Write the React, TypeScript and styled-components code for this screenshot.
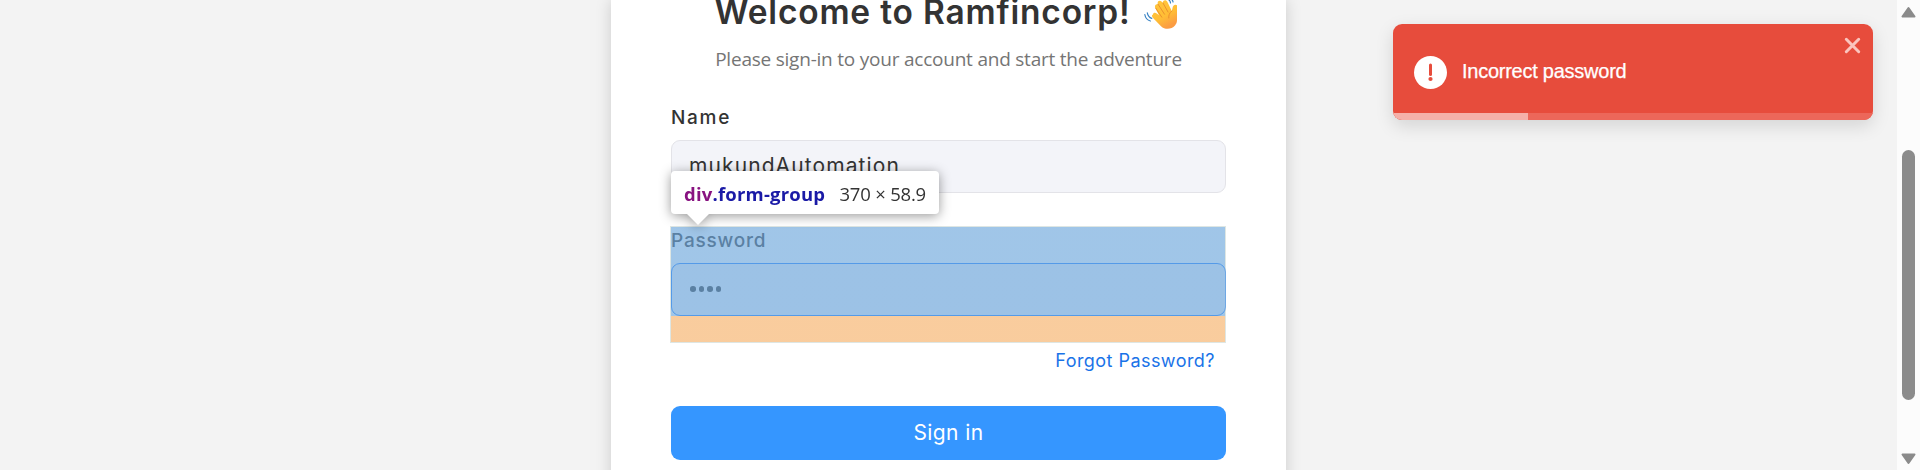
import React from 'react';
import styled, { createGlobalStyle } from 'styled-components';

const Global = createGlobalStyle`
  * { box-sizing: border-box; }
  body { margin: 0; background: #f3f3f3; overflow: hidden; font-family: Inter, "Liberation Sans", sans-serif; }
`;

const Screen = styled.div`
  display: flex;
  height: 470px;
  overflow: hidden;
  position: relative;
`;

const Main = styled.main`
  width: 1897px;
  display: flex;
  justify-content: center;
  background: #f3f3f3;
`;

const Card = styled.section`
  width: 675px;
  height: 500px;
  padding: 0 60px;
  background: #fff;
  box-shadow: 0 0 15px rgba(0, 0, 0, 0.16);
`;

const Title = styled.h1`
  display: flex;
  justify-content: center;
  margin: 0;
  height: 25px;
  padding-right: 6px;
  font-size: 33.5px;
  line-height: 25px;
  font-weight: 600;
  letter-spacing: 0.8px;
  white-space: nowrap;
  color: #333;
`;

const Wave = styled.svg`
  flex: none;
  width: 33px;
  height: 30px;
  margin-left: 13px;
`;

const Subtitle = styled.p`
  margin: 20px 0 31px;
  height: 28px;
  line-height: 28px;
  text-align: center;
  white-space: nowrap;
  font-family: "Open Sans", "Noto Sans", sans-serif;
  font-size: 19px;
  letter-spacing: -0.22px;
  color: #757575;
`;

const FormGroup = styled.div<{ $gap: number }>`
  position: relative;
  height: 89px;
  margin-bottom: ${(p) => p.$gap}px;
`;

const Label = styled.label<{ $spacing: number }>`
  display: block;
  height: 27px;
  margin-bottom: 9px;
  font-size: 19px;
  line-height: 27px;
  font-weight: 500;
  letter-spacing: ${(p) => p.$spacing}px;
  color: #333;
`;

const Field = styled.div<{ $focused?: boolean }>`
  display: flex;
  align-items: center;
  height: 53px;
  padding: 0 17px 2px 17px;
  border: 1px solid ${(p) => (p.$focused ? '#2080ff' : '#e3e3e8')};
  border-radius: 9px;
  background: #f3f4f9;
  font-size: 21px;
  letter-spacing: 1.1px;
  color: #333;
`;

const Dots = styled.div`
  display: flex;
  gap: 3px;
  padding: 1px 0 0 1px;
`;

const Dot = styled.i`
  width: 5.6px;
  height: 5.6px;
  border-radius: 50%;
  background: #333;
`;

const Highlight = styled.div`
  position: absolute;
  inset: -1px 0 -27px -1px;
  border: 1px solid rgba(190, 205, 200, 0.5);
  background: linear-gradient(rgba(111, 168, 220, 0.66) 89px, rgba(246, 178, 107, 0.66) 89px);
  background-clip: padding-box;
`;

const Tooltip = styled.div`
  position: absolute;
  top: -56px;
  left: 0;
  display: flex;
  align-items: center;
  width: 268px;
  height: 43px;
  padding: 1px 13px 0;
  border-radius: 4px;
  background: #fff;
  filter: drop-shadow(0 2px 6px rgba(0, 0, 0, 0.4));
  font-family: "Open Sans", "Noto Sans", sans-serif;
  font-size: 18.5px;
  white-space: nowrap;
  color: #333;
  &::after {
    content: '';
    position: absolute;
    left: 15px;
    top: 42px;
    border: 12px solid transparent;
    border-top-color: #fff;
    border-bottom: 0;
  }
`;

const Selector = styled.span`
  font-weight: 700;
  color: #1a1aa6;
  letter-spacing: 0.2px;
`;
const Tag = styled.span`
  color: #881280;
`;
const Size = styled.span`
  margin-left: auto;
  letter-spacing: -0.2px;
`;

const Forgot = styled.a`
  display: block;
  height: 24px;
  margin-bottom: 33px;
  padding-right: 11px;
  text-align: right;
  font-size: 18px;
  line-height: 24px;
  letter-spacing: 0.45px;
  color: #1a73e8;
`;

const Submit = styled.button`
  display: block;
  width: 100%;
  height: 54px;
  padding: 0 0 1px;
  border: 0;
  border-radius: 9px;
  background: #3596ff;
  color: #fff;
  font-family: inherit;
  font-size: 21px;
  letter-spacing: 0.4px;
`;

const Toast = styled.aside`
  position: absolute;
  top: 24px;
  left: 1393px;
  display: flex;
  align-items: center;
  width: 480px;
  height: 96px;
  padding: 0 12px 0 21px;
  border-radius: 9px;
  overflow: hidden;
  background: #e74c3c;
  color: #fff;
  font-family: "Liberation Sans", Arial, sans-serif;
  font-size: 20px;
`;

const ToastShadow = styled.div`
  position: absolute;
  top: 24px;
  left: 1393px;
  width: 480px;
  height: 96px;
  border-radius: 9px;
  box-shadow: 0 6px 18px rgba(0, 0, 0, 0.13);
`;

const AlertIcon = styled.svg`
  width: 33px;
  height: 33px;
  margin-right: 15px;
`;

const Message = styled.span`
  flex: 1;
  padding-bottom: 2px;
  letter-spacing: -0.25px;
  -webkit-text-stroke: 0.25px #fff;
`;

const Close = styled.svg`
  align-self: flex-start;
  width: 17px;
  height: 17px;
  margin-top: 13px;
`;

const Progress = styled.div`
  position: absolute;
  left: 0;
  right: 0;
  bottom: 0;
  height: 7px;
  background: #ec675a;
  &::before {
    content: '';
    display: block;
    width: 134.5px;
    height: 7px;
    background: #f5b0a9;
  }
`;

const Scrollbar = styled.div`
  display: flex;
  flex-direction: column;
  align-items: center;
  justify-content: space-between;
  width: 23px;
  padding: 6px 0 5px;
  background: #fcfcfc;
`;

const Thumb = styled.div`
  width: 13px;
  height: 250px;
  margin-top: 79px;
  border-radius: 7px;
  background: #8b8b8b;
`;

const Arrow = ({ down = false }: { down?: boolean }) => (
  <svg width="15" height="12" viewBox="0 0 15 12">
    <path
      d={down ? 'M1.5 1.5h12L7.5 10z' : 'M1.5 10.5h12L7.5 2z'}
      fill="#8b8b8b"
      stroke="#8b8b8b"
      strokeWidth="2"
      strokeLinejoin="round"
    />
  </svg>
);

const WavingHand = () => (
  <Wave viewBox="0 0 33 30">
    <defs>
      <linearGradient id="skin" x1="0" y1="0" x2="0.5" y2="1">
        <stop offset="0" stopColor="#ffc83d" />
        <stop offset="0.65" stopColor="#ffbd35" />
        <stop offset="1" stopColor="#fb9c42" />
      </linearGradient>
    </defs>
    <path
      d="M9 14.5C7.2 15 8 17.3 9.5 18.5L17 26.2C21 30 27.5 29.6 31 25.5C32.2 24 33 22.5 33 20V5.3C31.3 4 29.1 5.1 28.7 7.2L27.8 11L23.2 1.5C21.8-.8 18.3.1 19 3L17.5 1.5C15.5-.4 12.7 1.4 14 4.1L13 4.2C10.9 4.5 10.4 6.4 11.5 8.4L15 15.2L12.8 13.6C11.2 12.3 9 12.7 9 14.5Z"
      fill="url(#skin)"
    />
    <path d="M11.8 8.2l6 9M14 4.2l6.5 10M19 3l5 9M27.8 11c-2.5 2.2-3.3 4-3 7" fill="none" stroke="#e98b2c" strokeWidth="0.9" strokeLinecap="round" />
    <path d="M.8 14.5c.6 3.4 2.6 5.8 5.6 6.5M3.3 12.8c.5 2.6 2 4.7 4.5 5.6M25 0c1 .8 1.4 1.8 1.5 3M28.2 0c.6.7.8 1.2.8 2" fill="none" stroke="#3983c4" strokeWidth="1.2" strokeLinecap="round" />
  </Wave>
);

export default function App() {
  return (
    <>
      <Global />
      <Screen>
        <Main>
          <Card>
            <Title>
              Welcome to Ramfincorp!
              <WavingHand />
            </Title>
            <Subtitle>Please sign-in to your account and start the adventure</Subtitle>
            <FormGroup $gap={34}>
              <Label $spacing={1.7}>Name</Label>
              <Field>mukundAutomation</Field>
            </FormGroup>
            <FormGroup $gap={33}>
              <Label $spacing={0.8}>Password</Label>
              <Field $focused>
                <Dots>
                  <Dot />
                  <Dot />
                  <Dot />
                  <Dot />
                </Dots>
              </Field>
              <Highlight />
              <Tooltip>
                <Selector>
                  <Tag>div</Tag>.form-group
                </Selector>
                <Size>370 × 58.9</Size>
              </Tooltip>
            </FormGroup>
            <Forgot>Forgot Password?</Forgot>
            <Submit>Sign in</Submit>
          </Card>
        </Main>
        <Scrollbar>
          <Arrow />
          <Thumb />
          <Arrow down />
        </Scrollbar>
        <ToastShadow />
        <Toast>
          <AlertIcon viewBox="0 0 33 33">
            <circle cx="16.5" cy="16.5" r="16.5" fill="#fff" />
            <path d="M16.5 9v9.5" stroke="#e74c3c" strokeWidth="3" strokeLinecap="round" />
            <circle cx="16.5" cy="23" r="2.1" fill="#e74c3c" />
          </AlertIcon>
          <Message>Incorrect password</Message>
          <Close viewBox="0 0 17 17">
            <path d="M2.3 2.3l12.4 12.4M14.7 2.3L2.3 14.7" stroke="#fac5be" strokeWidth="3" strokeLinecap="round" />
          </Close>
          <Progress />
        </Toast>
      </Screen>
    </>
  );
}
